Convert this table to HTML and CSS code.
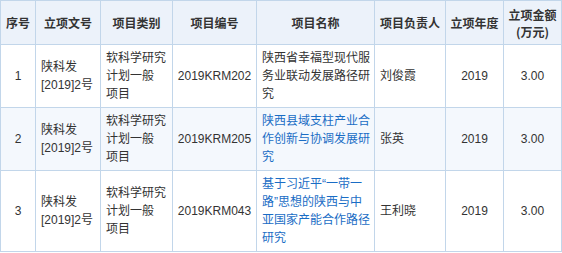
FILE: index.html
```html
<!DOCTYPE html>
<html lang="zh-CN">
<head>
    <meta charset="UTF-8">
    <meta name="viewport" content="width=device-width, initial-scale=1.0">
    <title>立项项目</title>
    <link rel="stylesheet" href="styles.css">
</head>
<body>
    <table class="projects">
        <colgroup>
            <col class="c-no">
            <col class="c-doc">
            <col class="c-type">
            <col class="c-code">
            <col class="c-name">
            <col class="c-lead">
            <col class="c-year">
            <col class="c-amt">
        </colgroup>
        <thead>
            <tr>
                <th>序号</th>
                <th>立项文号</th>
                <th>项目类别</th>
                <th>项目编号</th>
                <th>项目名称</th>
                <th>项目负责人</th>
                <th>立项年度</th>
                <th>立项金额<br>(万元)</th>
            </tr>
        </thead>
        <tbody>
            <tr>
                <td class="center">1</td>
                <td>陕科发[2019]2号</td>
                <td>软科学研究计划一般<span class="nw">项目</span></td>
                <td class="center">2019KRM202</td>
                <td>陕西省幸福型现代服务业联动发展路径研究</td>
                <td>刘俊霞</td>
                <td class="center">2019</td>
                <td class="center">3.00</td>
            </tr>
            <tr class="alt">
                <td class="center">2</td>
                <td>陕科发[2019]2号</td>
                <td>软科学研究计划一般<span class="nw">项目</span></td>
                <td class="center">2019KRM205</td>
                <td><a href="#">陕西县域支柱产业合作创新与协调发展研究</a></td>
                <td>张英</td>
                <td class="center">2019</td>
                <td class="center">3.00</td>
            </tr>
            <tr>
                <td class="center">3</td>
                <td>陕科发[2019]2号</td>
                <td>软科学研究计划一般<span class="nw">项目</span></td>
                <td class="center">2019KRM043</td>
                <td><a href="#">基于习近平“一带一路”思想的陕西与中亚国家产能合作路径研究</a></td>
                <td>王利晓</td>
                <td class="center">2019</td>
                <td class="center">3.00</td>
            </tr>
        </tbody>
    </table>
</body>
</html>
```

FILE: styles.css
```css
body {
    margin: 0;
    background: #fff;
    font-family: "Liberation Sans", "Noto Sans CJK SC", sans-serif;
    font-size: 12px;
    color: #333;
}
.projects {
    width: 561px;
    table-layout: fixed;
    border-collapse: collapse;
    border: 1px solid #c2d6ea;
}
.c-no { width: 35px; }
.c-doc { width: 65px; }
.c-type { width: 72px; }
.c-code { width: 84px; }
.c-name { width: 118px; }
.c-lead { width: 71px; }
.c-year { width: 58px; }
.c-amt { width: 58px; }
.projects th,
.projects td {
    border: 1px solid #c2d6ea;
    line-height: 18px;
    padding: 4px 4px;
    vertical-align: middle;
}
.projects th {
    height: 35px;
    background: #ecf2fa;
    color: #333;
    font-family: "Noto Sans CJK SC", sans-serif;
    font-weight: bold;
    font-size: 12px;
    line-height: 17px;
    padding: 4px 0;
    text-align: center;
}
.projects td {
    text-align: left;
    padding-left: 5px;
}
.projects td.center {
    text-align: center;
    padding-left: 4px;
}
.projects tr.alt td {
    background: #f4f8fd;
}
.projects a {
    color: #1a6dc5;
    text-decoration: none;
}
.nw {
    white-space: nowrap;
}
```
